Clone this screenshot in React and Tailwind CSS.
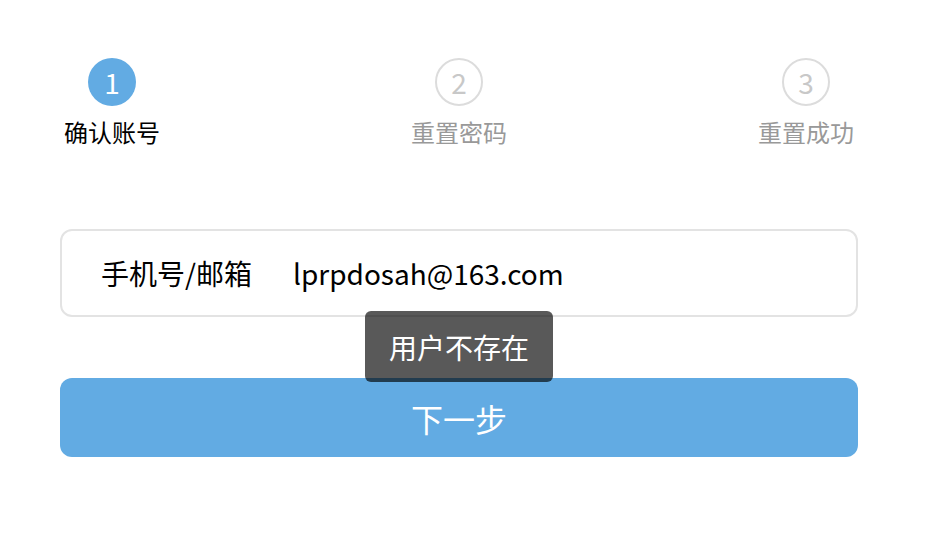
export default function App() {
  const font = { fontFamily: '"Noto Sans CJK SC", "Noto Sans", sans-serif' };
  const steps = [
    { n: "1", label: "确认账号", active: true },
    { n: "2", label: "重置密码", active: false },
    { n: "3", label: "重置成功", active: false },
  ];
  return (
    <div className="w-[935px] h-[537px] bg-white font-['Noto_Sans_CJK_SC',sans-serif]" style={font}>
      <div className="ml-[60px] w-[798px] pt-[58px]">
        <div className="flex justify-between px-[4px]">
          {steps.map((s) => (
            <div key={s.n} className="w-[96px] flex flex-col items-center">
              {s.active ? (
                <div className="w-[48px] h-[48px] rounded-full bg-[#62abe3] text-white text-[28px] leading-none flex items-center justify-center">
                  {s.n}
                </div>
              ) : (
                <div className="w-[48px] h-[48px] rounded-full border-2 border-[#dcdcdc] text-[#c8c8c8] text-[28px] leading-none flex items-center justify-center">
                  {s.n}
                </div>
              )}
              <div
                className={
                  "mt-[9px] text-[24px] leading-[34px] whitespace-nowrap " +
                  (s.active ? "text-black" : "text-[#999999]")
                }
              >
                {s.label}
              </div>
            </div>
          ))}
        </div>

        <div className="mt-[80px] h-[88px] border-2 border-[#e3e3e3] rounded-[12px] flex items-center pl-[39px] text-[28px] text-black">
          <span className="w-[192px] whitespace-nowrap">手机号/邮箱</span>
          <span>lprpdosah@163.com</span>
        </div>

        <div className="relative mt-[61px]">
          <div className="h-[79px] rounded-[12px] bg-[#62abe3] text-white text-[32px] flex items-center justify-center">
            下一步
          </div>
          <div className="absolute left-[305px] top-[-67px] w-[188px] h-[71px] rounded-[6px] bg-black/65 text-white text-[28px] flex items-center justify-center">
            用户不存在
          </div>
        </div>
      </div>
    </div>
  );
}
